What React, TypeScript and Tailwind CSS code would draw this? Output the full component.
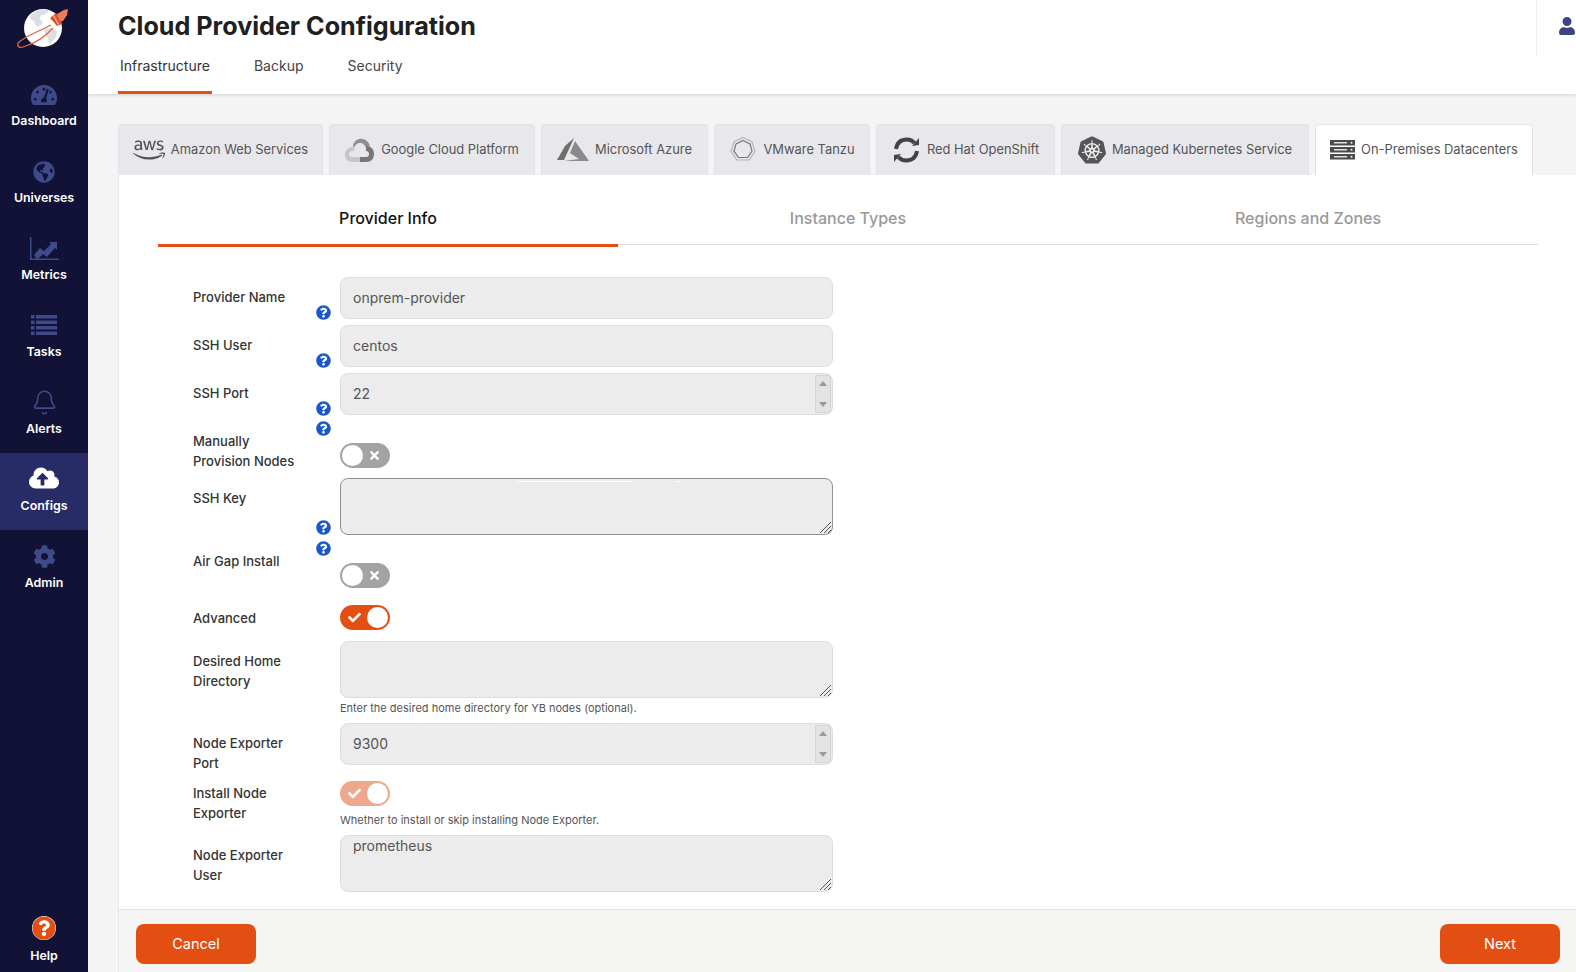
import React from 'react';
import { FaAws, FaCheck, FaCloudUploadAlt, FaCog, FaGlobeAmericas, FaQuestionCircle, FaTachometerAlt, FaTimes, FaUser } from 'react-icons/fa';
import { SiKubernetes } from 'react-icons/si';
import { Bell } from 'lucide-react';

function Logo() {
    return (
        <svg width="60" height="50" viewBox="0 0 60 50">
            <circle cx="26" cy="24" r="19" fill="#fff" />
            <path d="M14 11l6-4 8-2 4 2-3 3-5 1-1 4 3 3-2 3-3 2-3-3-1-3-5-3z" fill="#d9dfe3" />
            <path d="M27 25l7-1 6 3-1 6-4 5-3 2-1-6-3-4z" fill="#d9dfe3" />
            <path d="M34 21C23 27 8 32 1 39c-1 4 2 5 5 4 10-3 22-10 30-19" fill="none" stroke="#dc6a45" strokeWidth="1.300" />
            <path d="M40 10l7-4 4-1-1 6-4 6-5 1z" fill="#ee7c5a" />
            <path d="M33 14l6-5 6 11-5 2z" fill="#d9552f" />
            <path d="M36 12l1-1 5 9-1 1z" fill="#f3a68e" />
        </svg>
    );
}

function MetricsIcon() {
    return (
        <svg width="29" height="23" viewBox="0 0 29 23" fill="#3f4a8a">
            <path d="M0 0h1.500v21.500H29V23H0z" />
            <path d="M4 18l6-7 4 3 7-7-2-2h8v8l-2-2-8 9-4-3-6 6z" />
        </svg>
    );
}

function TasksIcon() {
    return (
        <svg width="26" height="21" viewBox="0 0 26 21" fill="#3f4a8a">
            <rect x="0" y="0" width="3.500" height="3.500" />
            <rect x="5" y="0" width="21" height="3.500" />
            <rect x="0" y="5.500" width="3.500" height="3.500" />
            <rect x="5" y="5.500" width="21" height="3.500" />
            <rect x="0" y="11" width="3.500" height="3.500" />
            <rect x="5" y="11" width="21" height="3.500" />
            <rect x="0" y="16.500" width="3.500" height="3.500" />
            <rect x="5" y="16.500" width="21" height="3.500" />
        </svg>
    );
}

function NavItem({ icon, label, active }: { icon: React.ReactNode; label: string; active?: boolean }) {
    return (
        <div className={active ? 'h-[77px] flex flex-col items-center bg-[#272b66] text-white' : 'h-[77px] flex flex-col items-center text-white'}>
            <div className="h-[27px] mt-[13px] flex items-center justify-center">{icon}</div>
            <span className="text-[12.400px] font-semibold mt-[3px] leading-5">{label}</span>
        </div>
    );
}

function GoogleIcon() {
    return (
        <svg width="30" height="26" viewBox="0 0 30 26">
            <path d="M8 9C9 3 14 1 18 2c4 1 6 4 7 7l-4 2c-1-3-3-5-6-5-3 0-5 2-6 5z" fill="#8f8f8f" />
            <path d="M21 9c5 0 8 3 8 8 0 5-3 8-8 8h-6v-5h6c2 0 3-1 3-3s-1-3-3-3z" fill="#777" />
            <path d="M8 10c-5 0-8 3-8 8 0 4 3 7 7 7h8v-5H7c-2 0-3-1-3-3 0-2 2-3 4-3l2-2z" fill="#c6c6c6" />
        </svg>
    );
}

function AzureIcon() {
    return (
        <svg width="32" height="25" viewBox="0 0 32 25">
            <path d="M17 1L8 9 0 23h7z" fill="#6f6f6f" />
            <path d="M18 4l-5 12 9 6-15 2h25z" fill="#8a8a8a" />
        </svg>
    );
}

function TanzuIcon() {
    return (
        <svg width="28" height="28" viewBox="0 0 28 28" fill="none">
            <path d="M14 1.500l9 4.300 3 9.500-6 8.700H8l-6-8.700 3-9.500z" stroke="#b5b5b5" strokeWidth="1.200" />
            <path d="M14 4.500l7 3.400 2 7.200-4.500 6.400h-9L5 15.100l2-7.200z" stroke="#777" strokeWidth="1.200" />
        </svg>
    );
}

function OpenShiftIcon() {
    return (
        <svg width="29" height="28" viewBox="0 0 29 28" fill="none" stroke="#444" strokeWidth="4">
            <path d="M4 13C5 7 9 3.500 15 3.500c3 0 5.500 1 7.500 3.500" />
            <path d="M25 15c-1 6-5 9.500-11 9.500-3 0-5.500-1-7.500-3.500" />
            <path d="M20 10l7-1V2z" fill="#444" stroke="none" />
            <path d="M9 18l-7 1v7z" fill="#444" stroke="none" />
        </svg>
    );
}

function ServerIcon() {
    return (
        <svg width="25" height="20" viewBox="0 0 25 20">
            <rect y="0" width="25" height="5.500" fill="#4b4b4b" />
            <rect y="7" width="25" height="5.500" fill="#4b4b4b" />
            <rect y="14" width="25" height="5.500" fill="#4b4b4b" />
            <rect x="4" y="2" width="13" height="1.500" fill="#ddd" />
            <rect x="4" y="9" width="13" height="1.500" fill="#ddd" />
            <rect x="4" y="16" width="13" height="1.500" fill="#ddd" />
            <circle cx="21.500" cy="2.700" r="1" fill="#eee" />
            <circle cx="21.500" cy="9.700" r="1" fill="#eee" />
            <circle cx="21.500" cy="16.700" r="1" fill="#eee" />
        </svg>
    );
}

function ProviderTab({ icon, label, active, width }: { icon: React.ReactNode; label: string; active?: boolean; width: string }) {
    return (
        <div className={`${width} ${active ? 'bg-white h-[52px] pb-[2px] z-10' : 'bg-[#e8e8ec] h-[51px] pb-[1px]'} border border-b-0 border-[#e3e3e3] rounded-t-[4px] flex items-center justify-center gap-[6px] text-[12.900px] text-[#555]`}>
            {icon}
            <span>{label}</span>
        </div>
    );
}

function HelpIcon({ className }: { className: string }) {
    return <FaQuestionCircle size={15} className={`${className} text-[#1a57c9] mr-[9px] shrink-0`} />;
}

function Toggle({ on, faded }: { on?: boolean; faded?: boolean }) {
    if (on) {
        return (
            <div className={faded ? 'w-[50px] h-[25px] rounded-full bg-[#efa88e] flex items-center pl-[8px] pr-[2px] justify-between' : 'w-[50px] h-[25px] rounded-full bg-[#e34f13] flex items-center pl-[8px] pr-[2px] justify-between'}>
                <FaCheck size={13} className="text-white" />
                <div className="w-[21px] h-[21px] rounded-full bg-white" />
            </div>
        );
    }
    return (
        <div className="w-[50px] h-[25px] rounded-full bg-[#a3a3a3] flex items-center pl-[2px] pr-[9px] justify-between">
            <div className="w-[21px] h-[21px] rounded-full bg-white" />
            <FaTimes size={13} className="text-white" />
        </div>
    );
}

function Label({ lines, className }: { lines: string[]; className: string }) {
    return (
        <div className={`${className} text-[13px] font-medium text-[#333] leading-[19.500px]`}>
            {lines.map((l) => (
                <div key={l}>{l}</div>
            ))}
        </div>
    );
}

const fieldBox = 'w-[493px] h-[42px] rounded-[8px] bg-[#ececec] border border-[#dedede] px-[12px] pb-[2px] text-[14px] text-[#555] font-[Inter,sans-serif] outline-none';

function Area({ value, dark }: { value?: string; dark?: boolean }) {
    return (
        <div className="relative w-[493px] h-[57px]">
            <textarea
                readOnly
                value={value ?? ''}
                className={`${dark ? 'border-[#8f8f96]' : 'border-[#dedede]'} block w-full h-full resize-none rounded-[8px] bg-[#ececec] border px-[12px] pt-[1px] text-[14px] text-[#555] leading-[18px] outline-none`}
            />
            <svg width="13" height="13" viewBox="0 0 13 13" className="absolute right-[1px] bottom-[1px]" stroke="#555" strokeWidth="1">
                <path d="M1 12L12 1M5 12l7-7M9 12l3-3" />
            </svg>
        </div>
    );
}

function TextRow({ label, value }: { label: string; value: string }) {
    return (
        <div className="flex h-[42px] mb-[6px]">
            <div className="w-[147px] flex justify-between">
                <Label lines={[label]} className="pt-[11px]" />
                <HelpIcon className="self-end -mb-px" />
            </div>
            <input readOnly value={value} className={fieldBox} />
        </div>
    );
}

function Spinner() {
    return (
        <div className="w-[16px] h-[38px] my-[1px] mr-[1px] bg-[#e3e3e3] border border-[#d4d4d4] rounded-[2px] flex flex-col items-center justify-between py-[5px]">
            <div className="w-0 h-0 border-x-[4px] border-x-transparent border-b-[5px] border-b-[#999]" />
            <div className="w-0 h-0 border-x-[4px] border-x-transparent border-t-[5px] border-t-[#999]" />
        </div>
    );
}

function NumberField({ value }: { value: string }) {
    return (
        <div className="w-[493px] h-[42px] rounded-[8px] bg-[#ececec] border border-[#dedede] flex items-center justify-between pl-[12px] text-[14px] text-[#555]">
            <span className="-mt-[2px]">{value}</span>
            <Spinner />
        </div>
    );
}

export default function App() {
    return (
        <div className="w-[1576px] h-[972px] overflow-hidden flex font-[Inter,sans-serif] bg-[#f4f4f4]">
            <aside className="w-[88px] shrink-0 bg-[#111235] flex flex-col">
                <div className="h-[68px] pt-[4px] pl-[17px]">
                    <Logo />
                </div>
                <NavItem icon={<FaTachometerAlt size={26} className="text-[#3f4a8a]" />} label="Dashboard" />
                <NavItem icon={<FaGlobeAmericas size={22} className="text-[#3f4a8a]" />} label="Universes" />
                <NavItem icon={<MetricsIcon />} label="Metrics" />
                <NavItem icon={<TasksIcon />} label="Tasks" />
                <NavItem icon={<Bell size={27} strokeWidth={1.4} className="text-[#3f4a8a]" />} label="Alerts" />
                <NavItem active icon={<FaCloudUploadAlt size={30} className="text-white -mt-[3px]" />} label="Configs" />
                <NavItem icon={<FaCog size={23} className="text-[#3f4a8a]" />} label="Admin" />
                <div className="mt-auto h-[56px]">
                    <div className="flex flex-col items-center text-white">
                        <FaQuestionCircle size={24} className="text-[#e34f13] bg-white rounded-full" />
                        <span className="text-[12.400px] font-semibold mt-[6px] leading-5">Help</span>
                    </div>
                </div>
            </aside>

            <div className="flex-1 min-w-0 flex flex-col">
                <header className="h-[94px] bg-white shadow-[0_1px_3px_rgba(0,0,0,0.15)] z-20 shrink-0 flex pl-[30px]">
                    <div className="flex-1">
                        <h1 className="text-[25.150px] font-bold text-[#202020] leading-[32px] mt-[10px]">Cloud Provider Configuration</h1>
                        <div className="flex gap-[40px] mt-[3px] text-[14px] text-[#444]">
                            <div className="h-[49px] pt-[10px] px-[2px] border-b-[3px] border-[#e34f13] text-[#333]">Infrastructure</div>
                            <div className="pt-[10px] px-[2px]">Backup</div>
                            <div className="pt-[10px] px-[2px]">Security</div>
                        </div>
                    </div>
                    <div className="w-[40px] h-[57px] border-l border-[#eee] pl-[21px] pt-[17px]">
                        <FaUser size={18} className="text-[#3e4585]" />
                    </div>
                </header>

                <main className="flex-1 min-h-0 pl-[30px] pt-[30px] flex flex-col">
                    <div className="flex gap-[6px] items-start h-[51px] shrink-0">
                        <ProviderTab width="w-[205px]" icon={<FaAws size={32} className="text-[#555]" />} label="Amazon Web Services" />
                        <ProviderTab width="w-[206px]" icon={<GoogleIcon />} label="Google Cloud Platform" />
                        <ProviderTab width="w-[167px]" icon={<AzureIcon />} label="Microsoft Azure" />
                        <ProviderTab width="w-[156px]" icon={<TanzuIcon />} label="VMware Tanzu" />
                        <ProviderTab width="w-[179px]" icon={<OpenShiftIcon />} label="Red Hat OpenShift" />
                        <ProviderTab width="w-[248px]" icon={<SiKubernetes size={28} className="text-[#555]" />} label="Managed Kubernetes Service" />
                        <ProviderTab active width="w-[218px]" icon={<ServerIcon />} label="On-Premises Datacenters" />
                    </div>

                    <section className="flex-1 min-h-0 bg-white border-l border-[#e8e8e8] flex flex-col">
                        <div className="flex-1 min-h-0 overflow-hidden">
                            <div className="ml-[39px] w-[1380px] flex border-b border-[#ddd] h-[70px] text-[16px] font-medium">
                                <div className="w-[460px] h-[72px] border-b-[3px] border-[#e34f13] text-center pt-[31px] text-[#111]">Provider Info</div>
                                <div className="w-[460px] text-center pt-[31px] text-[#999]">Instance Types</div>
                                <div className="w-[460px] text-center pt-[31px] text-[#999]">Regions and Zones</div>
                            </div>

                            <div className="ml-[74px] mt-[32px]">
                                <TextRow label="Provider Name" value="onprem-provider" />
                                <TextRow label="SSH User" value="centos" />
                                <div className="flex h-[42px] mb-[6px]">
                                    <div className="w-[147px] flex justify-between">
                                        <Label lines={['SSH Port']} className="pt-[11px]" />
                                        <HelpIcon className="self-end -mb-px" />
                                    </div>
                                    <NumberField value="22" />
                                </div>

                                <div className="flex h-[51px] mb-[6px]">
                                    <div className="w-[147px] flex justify-between">
                                        <Label lines={['Manually', 'Provision Nodes']} className="pt-[11px]" />
                                        <HelpIcon className="self-start" />
                                    </div>
                                    <div className="pt-[22px]">
                                        <Toggle />
                                    </div>
                                </div>

                                <div className="flex h-[57px] mb-[6px]">
                                    <div className="w-[147px] flex justify-between">
                                        <Label lines={['SSH Key']} className="pt-[11px]" />
                                        <HelpIcon className="self-end" />
                                    </div>
                                    <div className="relative">
                                        <Area dark />
                                        <div className="absolute top-[3px] left-[177px] w-[116px] h-px bg-white" />
                                        <div className="absolute top-[3px] left-[336px] w-[4px] h-px bg-white" />
                                    </div>
                                </div>

                                <div className="flex h-[46px] mb-[18px]">
                                    <div className="w-[147px] flex justify-between">
                                        <Label lines={['Air Gap Install']} className="pt-[11px]" />
                                        <HelpIcon className="self-start" />
                                    </div>
                                    <div className="pt-[22px]">
                                        <Toggle />
                                    </div>
                                </div>

                                <div className="flex h-[25px] mb-[11px] items-center">
                                    <Label lines={['Advanced']} className="w-[147px] pt-[2px]" />
                                    <Toggle on />
                                </div>

                                <div className="flex h-[57px]">
                                    <Label lines={['Desired Home', 'Directory']} className="w-[147px] pt-[11px]" />
                                    <Area />
                                </div>
                                <p className="ml-[147px] text-[11px] text-[#555] leading-[20px] h-[25px]">Enter the desired home directory for YB nodes (optional).</p>

                                <div className="flex h-[42px] mb-[16px]">
                                    <Label lines={['Node Exporter', 'Port']} className="w-[147px] pt-[11px]" />
                                    <NumberField value="9300" />
                                </div>

                                <div className="flex h-[54px]">
                                    <Label lines={['Install Node', 'Exporter']} className="w-[147px] pt-[3px]" />
                                    <div>
                                        <Toggle on faded />
                                        <p className="text-[11px] text-[#555] leading-[16px] mt-[6px]">Whether to install or skip installing Node Exporter.</p>
                                    </div>
                                </div>

                                <div className="flex h-[57px]">
                                    <Label lines={['Node Exporter', 'User']} className="w-[147px] pt-[11px]" />
                                    <Area value="prometheus" />
                                </div>
                            </div>
                        </div>

                        <footer className="h-[63px] shrink-0 bg-[#f5f5f3] border-t border-[#e5e5e5] flex justify-between pl-[17px] pr-[16px] pt-[14px]">
                            <div className="w-[120px] h-[40px] rounded-[8px] bg-[#e34f13] text-white text-[14.500px] flex items-center justify-center">Cancel</div>
                            <div className="w-[120px] h-[40px] rounded-[8px] bg-[#e34f13] text-white text-[14.500px] flex items-center justify-center">Next</div>
                        </footer>
                    </section>
                </main>
            </div>
        </div>
    );
}
